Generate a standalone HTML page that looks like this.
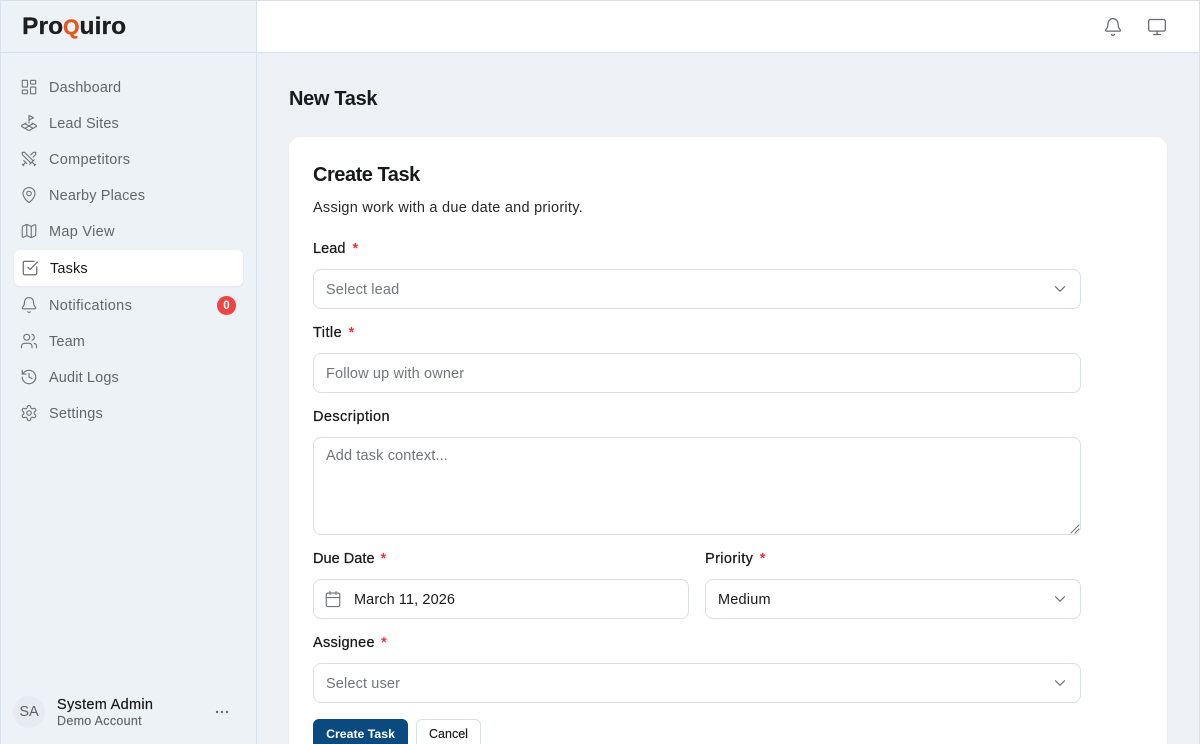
<!DOCTYPE html>
<html lang="en"><head><meta charset="utf-8"><title>New Task</title>
<style>
*{box-sizing:border-box}
html,body{margin:0;padding:0;width:1200px;height:744px;overflow:hidden;background:#edf1f6}
body{font-family:"Liberation Sans",sans-serif;color:#18191b;position:relative}
#frame{position:absolute;inset:0;border:1px solid #d8e0ea;border-bottom:0;pointer-events:none;z-index:9}
.t{position:absolute;white-space:nowrap;line-height:20px;height:20px;font-size:14.5px;margin-top:1px}
.m{left:49px;color:#63666c;letter-spacing:.14px}
.l{font-weight:400;color:#18191b;-webkit-text-stroke:.25px #18191b;letter-spacing:.04px}
.r{color:#f5222d;margin-left:3px;-webkit-text-stroke:.3px #f5222d}
.ph{color:#71757b;letter-spacing:.14px}
.box{position:absolute;background:#fff;border:1px solid #d9dfe9;border-radius:8px}
svg{position:absolute;fill:none;stroke-linecap:round;stroke-linejoin:round}
.i{width:18px;height:18px;left:20px;stroke:#6f7277;stroke-width:1.5;margin-top:-1px}
.c{width:18px;height:18px;left:1051px;stroke:#65686d;stroke-width:1.6;margin-top:-1px}
</style></head><body>
<div id="frame"></div>
<div style="position:absolute;left:0;top:0;width:257px;height:744px;background:#edf2f7;border-right:1px solid #d8e0ea"></div>
<div style="position:absolute;left:0;top:52px;width:257px;height:1px;background:#d8e0ea"></div>
<div style="position:absolute;left:257px;top:0;width:943px;height:53px;background:#fff;border-bottom:1px solid #d8e0ea"></div>

<div style="position:absolute;left:22px;top:12px;height:30px;line-height:30px;font-size:24.5px;font-weight:700;color:#1d1e20;white-space:nowrap;letter-spacing:.1px;-webkit-text-stroke:.3px #1d1e20">Pro<span style="color:#e0591f;font-size:21px;letter-spacing:0;-webkit-text-stroke:.4px #e0591f">Q</span>uiro</div>

<div style="position:absolute;left:14px;top:250px;width:229px;height:36px;background:#fff;border-radius:6px;box-shadow:0 1px 2px rgba(20,30,50,.06)"></div>

<svg class="i" style="top:79px" viewBox="0 0 24 24"><rect x="3" y="3" width="7" height="9" rx="1"/><rect x="14" y="3" width="7" height="5" rx="1"/><rect x="14" y="12" width="7" height="9" rx="1"/><rect x="3" y="16" width="7" height="5" rx="1"/></svg>
<div class="t m" style="top:77px">Dashboard</div>
<svg class="i" style="top:115px" viewBox="0 0 24 24"><path d="m12 8 6-3-6-3v10"/><path d="m8 11.99-5.5 3.14a1 1 0 0 0 0 1.74l8.5 4.86a2 2 0 0 0 2 0l8.5-4.86a1 1 0 0 0 0-1.74L16 12"/><path d="m6.49 12.85 11.02 6.3"/><path d="M17.51 12.85 6.5 19.15"/></svg>
<div class="t m" style="top:113px">Lead Sites</div>
<svg class="i" style="top:151px" viewBox="0 0 24 24"><polyline points="14.5 17.5 3 6 3 3 6 3 17.5 14.5"/><line x1="13" y1="19" x2="19" y2="13"/><line x1="16" y1="16" x2="20" y2="20"/><line x1="19" y1="21" x2="21" y2="19"/><polyline points="14.5 6.5 18 3 21 3 21 6 17.5 9.5"/><line x1="5" y1="14" x2="9" y2="18"/><line x1="7" y1="17" x2="4" y2="20"/><line x1="3" y1="19" x2="5" y2="21"/></svg>
<div class="t m" style="top:149px;letter-spacing:.28px">Competitors</div>
<svg class="i" style="top:187px" viewBox="0 0 24 24"><path d="M20 10c0 4.993-5.539 10.193-7.399 11.799a1 1 0 0 1-1.202 0C9.539 20.193 4 14.993 4 10a8 8 0 0 1 16 0"/><circle cx="12" cy="10" r="3"/></svg>
<div class="t m" style="top:185px">Nearby Places</div>
<svg class="i" style="top:223px" viewBox="0 0 24 24"><path d="M14.106 5.553a2 2 0 0 0 1.788 0l3.659-1.83A1 1 0 0 1 21 4.619v12.764a1 1 0 0 1-.553.894l-4.553 2.277a2 2 0 0 1-1.788 0l-4.212-2.106a2 2 0 0 0-1.788 0l-3.659 1.83A1 1 0 0 1 3 19.381V6.618a1 1 0 0 1 .553-.894l4.553-2.277a2 2 0 0 1 1.788 0z"/><path d="M15 5.764v15"/><path d="M9 3.236v15"/></svg>
<div class="t m" style="top:221px;letter-spacing:.3px">Map View</div>
<svg class="i" style="top:260px;left:21px;stroke:#5b5e63" viewBox="0 0 24 24"><path d="M21 10.5V19a2 2 0 0 1-2 2H5a2 2 0 0 1-2-2V5a2 2 0 0 1 2-2h12.5"/><path d="m9 11 3 3L22 4"/></svg>
<div class="t m" style="top:258px;left:50px;color:#18191b">Tasks</div>
<svg class="i" style="top:297px" viewBox="0 0 24 24"><path d="M10.268 21a2 2 0 0 0 3.464 0"/><path d="M3.262 15.326A1 1 0 0 0 4 17h16a1 1 0 0 0 .74-1.673C19.41 13.956 18 12.499 18 8A6 6 0 0 0 6 8c0 4.499-1.411 5.956-2.738 7.326"/></svg>
<div class="t m" style="top:295px;letter-spacing:.32px">Notifications</div>
<div style="position:absolute;left:217px;top:296px;width:19px;height:19px;border-radius:50%;background:#ef4444;color:#fff;font-size:11.5px;font-weight:700;line-height:20px;text-align:center">0</div>
<svg class="i" style="top:333px" viewBox="0 0 24 24"><path d="M16 21v-2a4 4 0 0 0-4-4H6a4 4 0 0 0-4 4v2"/><path d="M16 3.128a4 4 0 0 1 0 7.744"/><path d="M22 21v-2a4 4 0 0 0-3-3.87"/><circle cx="9" cy="7" r="4"/></svg>
<div class="t m" style="top:331px">Team</div>
<svg class="i" style="top:369px" viewBox="0 0 24 24"><path d="M3 12a9 9 0 1 0 9-9 9.75 9.75 0 0 0-6.74 2.74L3 8"/><path d="M3 3v5h5"/><path d="M12 7v5l4 2"/></svg>
<div class="t m" style="top:367px">Audit Logs</div>
<svg class="i" style="top:405px" viewBox="0 0 24 24"><path d="M12.22 2h-.44a2 2 0 0 0-2 2v.18a2 2 0 0 1-1 1.73l-.43.25a2 2 0 0 1-2 0l-.15-.08a2 2 0 0 0-2.73.73l-.22.38a2 2 0 0 0 .73 2.73l.15.1a2 2 0 0 1 1 1.72v.51a2 2 0 0 1-1 1.74l-.15.09a2 2 0 0 0-.73 2.73l.22.38a2 2 0 0 0 2.73.73l.15-.08a2 2 0 0 1 2 0l.43.25a2 2 0 0 1 1 1.73V20a2 2 0 0 0 2 2h.44a2 2 0 0 0 2-2v-.18a2 2 0 0 1 1-1.73l.43-.25a2 2 0 0 1 2 0l.15.08a2 2 0 0 0 2.73-.73l.22-.39a2 2 0 0 0-.73-2.73l-.15-.08a2 2 0 0 1-1-1.74v-.5a2 2 0 0 1 1-1.74l.15-.09a2 2 0 0 0 .73-2.73l-.22-.38a2 2 0 0 0-2.73-.73l-.15.08a2 2 0 0 1-2 0l-.43-.25a2 2 0 0 1-1-1.73V4a2 2 0 0 0-2-2z"/><circle cx="12" cy="12" r="3"/></svg>
<div class="t m" style="top:403px;letter-spacing:.2px">Settings</div>

<div style="position:absolute;left:13px;top:696px;width:32px;height:32px;border-radius:50%;background:#e7ebf1;color:#5f6268;font-size:14.5px;line-height:33px;text-align:center">SA</div>
<div class="t" style="left:57px;top:694px;color:#18191b;-webkit-text-stroke:.2px #18191b;letter-spacing:.3px">System Admin</div>
<div class="t" style="left:57px;top:710px;font-size:12.5px;color:#63666c;letter-spacing:.3px;-webkit-text-stroke:.15px #63666c">Demo Account</div>
<svg style="left:215px;top:708px;width:14px;height:8px" viewBox="0 0 14 8"><circle cx="2" cy="4" r="1.2" fill="#63666c"/><circle cx="7" cy="4" r="1.2" fill="#63666c"/><circle cx="12" cy="4" r="1.2" fill="#63666c"/></svg>

<svg style="left:1103px;top:17px;width:20px;height:20px;stroke:#65686d;stroke-width:1.5" viewBox="0 0 24 24"><path d="M10.268 21a2 2 0 0 0 3.464 0"/><path d="M3.262 15.326A1 1 0 0 0 4 17h16a1 1 0 0 0 .74-1.673C19.41 13.956 18 12.499 18 8A6 6 0 0 0 6 8c0 4.499-1.411 5.956-2.738 7.326"/></svg>
<svg style="left:1147px;top:17px;width:20px;height:20px;stroke:#65686d;stroke-width:1.5" viewBox="0 0 24 24"><rect x="2" y="3" width="20" height="14" rx="2"/><line x1="8" y1="21" x2="16" y2="21"/><line x1="12" y1="17" x2="12" y2="21"/></svg>

<div style="position:absolute;left:289px;top:88px;height:22px;line-height:22px;font-size:20px;font-weight:700;color:#18191b;white-space:nowrap;letter-spacing:-.32px">New Task</div>

<div style="position:absolute;left:289px;top:137px;width:878px;height:640px;background:#fff;border-radius:12px;box-shadow:0 1px 2px rgba(20,30,50,.04)"></div>
<div style="position:absolute;left:313px;top:163px;height:24px;line-height:24px;font-size:20px;font-weight:700;color:#18191b;white-space:nowrap;letter-spacing:-.47px">Create Task</div>
<div class="t" style="left:313px;top:197px;letter-spacing:.26px;color:#26282b">Assign work with a due date and priority.</div>

<div class="t l" style="left:313px;top:238px">Lead <span class="r">*</span></div>
<div class="box" style="left:313px;top:269px;width:768px;height:40px"></div>
<div class="t ph" style="left:326px;top:279px">Select lead</div>
<svg class="c" style="top:281px" viewBox="0 0 24 24"><path d="m6 9 6 6 6-6"/></svg>

<div class="t l" style="left:313px;top:322px;letter-spacing:.45px">Title <span class="r" style="margin-left:2px">*</span></div>
<div class="box" style="left:313px;top:353px;width:768px;height:40px"></div>
<div class="t ph" style="left:326px;top:363px">Follow up with owner</div>

<div class="t l" style="left:313px;top:406px;letter-spacing:.4px">Description</div>
<div class="box" style="left:313px;top:437px;width:768px;height:98px"></div>
<div class="t ph" style="left:326px;top:445px">Add task context...</div>
<svg style="left:1070px;top:524px;width:10px;height:10px;stroke:#6f7277;stroke-width:1" viewBox="0 0 10 10"><path d="M9 1 1 9M9 5 5 9"/></svg>

<div class="t l" style="left:313px;top:548px">Due Date <span class="r" style="margin-left:2px">*</span></div>
<div class="box" style="left:313px;top:579px;width:376px;height:40px"></div>
<svg style="left:324px;top:590px;width:18px;height:18px;stroke:#6f7277;stroke-width:1.5" viewBox="0 0 24 24"><path d="M8 2v4"/><path d="M16 2v4"/><rect x="3" y="4" width="18" height="18" rx="2"/><path d="M3 10h18"/></svg>
<div class="t" style="left:354px;top:589px;letter-spacing:.1px;color:#18191b">March 11, 2026</div>

<div class="t l" style="left:705px;top:548px;letter-spacing:.4px">Priority <span class="r" style="margin-left:2px">*</span></div>
<div class="box" style="left:705px;top:579px;width:376px;height:40px"></div>
<div class="t" style="left:718px;top:589px;letter-spacing:.2px;color:#18191b">Medium</div>
<svg class="c" style="top:591px" viewBox="0 0 24 24"><path d="m6 9 6 6 6-6"/></svg>

<div class="t l" style="left:313px;top:632px;letter-spacing:.27px">Assignee <span class="r" style="margin-left:2px">*</span></div>
<div class="box" style="left:313px;top:663px;width:768px;height:40px"></div>
<div class="t ph" style="left:326px;top:673px">Select user</div>
<svg class="c" style="top:675px" viewBox="0 0 24 24"><path d="m6 9 6 6 6-6"/></svg>

<div style="position:absolute;left:313px;top:719px;width:95px;height:32px;background:#0a4a7e;border-radius:6px;color:#fff;font-size:12.3px;font-weight:700;line-height:30px;text-align:center">Create Task</div>
<div style="position:absolute;left:416px;top:719px;width:65px;height:32px;background:#fff;border:1px solid #d9dfe9;border-radius:6px;color:#18191b;font-size:12.5px;line-height:28px;text-align:center;-webkit-text-stroke:.15px #18191b">Cancel</div>
</body></html>
